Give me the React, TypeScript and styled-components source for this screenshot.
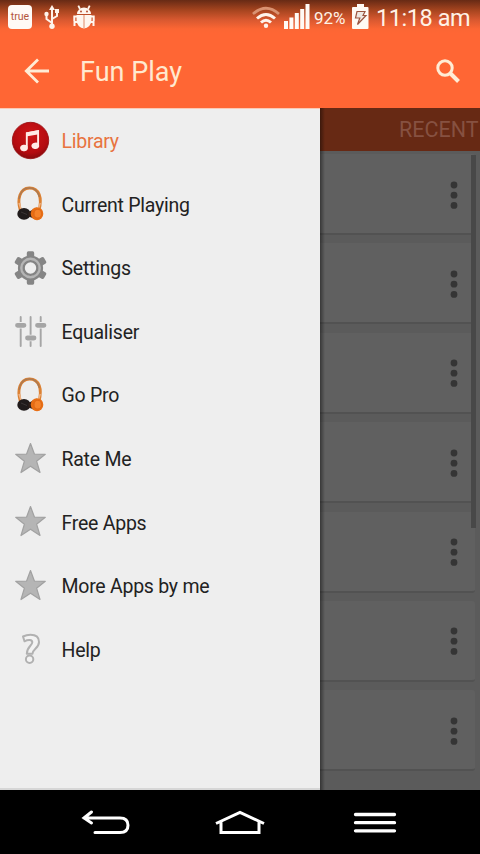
import React from "react";
import styled, { createGlobalStyle } from "styled-components";

const GlobalStyle = createGlobalStyle`
  * { box-sizing: border-box; }
  body { margin: 0; background: #000; font-family: Roboto, "Liberation Sans", sans-serif; }
  svg { display: block; flex: none; overflow: visible; }
`;

const Screen = styled.div`
  width: 480px;
  height: 854px;
  display: flex;
  flex-direction: column;
  overflow: hidden;
  background: #000;
`;

const Header = styled.header`
  height: 108px;
  flex: none;
  background: linear-gradient(#672a15 0, #a5441f 10px, #d95930 20px, #fc6634 29px, #ff6634 34px);
`;

const StatusBar = styled.div`
  height: 34px;
  display: flex;
  align-items: flex-start;
  color: #fff2e6;
`;

const StatusGroup = styled.div<{ $push?: boolean }>`
  height: 34px;
  display: flex;
  margin-left: ${(p) => (p.$push ? "auto" : "0")};
`;

const TrueBadge = styled.div`
  width: 24px;
  height: 24px;
  margin: 5px 0 0 8px;
  border-radius: 4px;
  background: #fffaf6;
  color: #b4553a;
  font-size: 10.5px;
  line-height: 23px;
  text-align: center;
`;

const StatusText = styled.span<{ $size: number; $width: number; $left: number; $spacing?: number }>`
  width: ${(p) => p.$width}px;
  margin-left: ${(p) => p.$left}px;
  font-size: ${(p) => p.$size}px;
  letter-spacing: ${(p) => p.$spacing ?? 0}px;
  line-height: 36px;
  white-space: nowrap;
`;

const ActionBar = styled.div`
  height: 74px;
  display: flex;
  align-items: center;
  padding: 0 20px 0 24px;
`;

const Title = styled.h1`
  flex: 1;
  margin: 2px 0 0 31px;
  color: #ffe9cf;
  font-size: 27px;
  font-weight: 400;
  line-height: 74px;
`;

const Body = styled.main`
  height: 682px;
  flex: none;
  display: flex;
`;

const Drawer = styled.nav`
  width: 320px;
  flex: none;
  background: #eee;
  border-top: 1px solid #fbc9b5;
  border-bottom: 2px solid #d6d6d6;
`;

const DrawerItem = styled.div<{ $active?: boolean }>`
  height: 63.6px;
  display: flex;
  align-items: center;
  gap: 11px;
  padding-left: 11px;
  font-size: 19.5px;
  letter-spacing: -0.25px;
  color: ${(p) => (p.$active ? "#e8733f" : "#222")};
`;

const ItemLabel = styled.span`
  padding: 1.5px 0 0 0.5px;
`;

const Content = styled.section`
  flex: 1;
  display: flex;
  flex-direction: column;
  position: relative;
  background: #5b5b5b;
`;

const DrawerShadow = styled.div`
  position: absolute;
  inset: 0 auto 0 0;
  width: 5px;
  background: linear-gradient(90deg, rgba(0, 0, 0, 0.42), rgba(0, 0, 0, 0));
`;

const TabStrip = styled.div`
  height: 43px;
  flex: none;
  padding-left: 79px;
  overflow: hidden;
  background: #672914;
  color: #865141;
  font-size: 21.5px;
  line-height: 43px;
  white-space: nowrap;
`;

const Cards = styled.div`
  display: flex;
  flex-direction: column;
  gap: 8.4px;
  padding: 3px 5px 0 0;
`;

const Card = styled.div`
  height: 81px;
  display: flex;
  align-items: center;
  justify-content: flex-end;
  padding: 2px 17px 0 0;
  background: #606060;
  border-bottom: 2px solid #525252;
  border-radius: 0 3px 3px 0;
`;

const ScrollThumb = styled.div`
  position: absolute;
  top: 47px;
  right: 4px;
  width: 5px;
  height: 373px;
  background: #484848;
`;

const NavBar = styled.footer`
  height: 64px;
  flex: none;
  display: flex;
  background: #000;
`;

const NavSlot = styled.div<{ $left: number }>`
  margin: 20px 0 0 ${(p) => p.$left}px;
`;

const Usb = () => (
  <svg width="16" height="24" viewBox="0 0 16 24" fill="none" stroke="#fff3ea" strokeWidth="2">
    <path d="M8 3v18M8 18L2.5 14V10M8 14l5-3V7" />
    <path d="M8 0l3 5H5z" fill="#fff3ea" stroke="none" />
    <circle cx="8" cy="21.3" r="2.7" fill="#fff3ea" stroke="none" />
    <circle cx="2.5" cy="9" r="2.2" fill="#fff3ea" stroke="none" />
    <path d="M11 4h4v4h-4z" fill="#fff3ea" stroke="none" />
  </svg>
);

const Bug = () => (
  <svg width="24" height="24" viewBox="0 0 24 24" fill="#fff6ee">
    <path d="M5 9a7 6.5 0 0 1 14 0z" />
    <path d="M8 4L6.3.6M16 4L17.7.6" stroke="#fff6ee" strokeWidth="1.8" />
    <path d="M5 11.5H2.3V16M19 11.5h2.7V16M5 17H2.5v4M19 17h2.5v4" stroke="#fff6ee" strokeWidth="2" fill="none" />
    <path d="M4.5 10h15v5a7.5 8.5 0 0 1-15 0z" />
    <path d="M12 10v13" stroke="#df8a68" />
    <circle cx="9" cy="6.5" r="1" fill="#b65131" />
    <circle cx="15" cy="6.5" r="1" fill="#b65131" />
  </svg>
);

const Wifi = () => (
  <svg width="28" height="24" viewBox="0 0 28 24" fill="none" stroke="#fff3ea" strokeWidth="3">
    <path d="M1 9Q14-2.5 27 9" stroke="#d99272" strokeWidth="2.8" />
    <path d="M5 13.5Q14 5.5 23 13.5" />
    <path d="M9 17.5Q14 13 19 17.5" />
    <circle cx="14" cy="20.7" r="2.2" fill="#fff3ea" stroke="none" />
  </svg>
);

const Signal = () => (
  <svg width="26" height="25" viewBox="0 0 26 25" fill="#fffaf5">
    <path d="M0 17h4v8H0zM5.4 13.5h4V25h-4zM10.8 9h4v16h-4zM16.2 5h4v20h-4zM21.5 0h4v25h-4z" />
  </svg>
);

const Battery = () => (
  <svg width="17" height="25" viewBox="0 0 17 25">
    <path d="M5 0h7v3h3.5q1 0 1 1v20q0 1-1 1H1q-1 0-1-1V4q0-1 1-1h4z" fill="#fffaf5" />
    <path d="M5 7.5h8l-2 4h3L5.5 20.5 7.8 14H3.5z" fill="#eee8e3" stroke="#9b5541" strokeWidth="1.2" />
  </svg>
);

const BackArrow = () => (
  <svg width="25" height="26" viewBox="0 0 25 26" fill="none" stroke="#ffecd5" strokeWidth="2.8">
    <path d="M14 1.5L2.3 13 14 24.5M2.3 13H25" />
  </svg>
);

const Search = () => (
  <svg width="25" height="26" viewBox="0 0 25 26" fill="none" stroke="#ffecd5">
    <circle cx="10" cy="10" r="7.2" strokeWidth="3" />
    <path d="M15 15l8.5 8.5" strokeWidth="4" />
  </svg>
);

const MusicIcon = () => (
  <svg width="39" height="40" viewBox="0 0 39 40">
    <defs>
      <radialGradient id="disc" cx="50%" cy="35%" r="65%">
        <stop offset="0" stopColor="#cf1517" />
        <stop offset="0.75" stopColor="#b40b10" />
        <stop offset="1" stopColor="#860a0d" />
      </radialGradient>
    </defs>
    <circle cx="19.5" cy="19.5" r="18.2" fill="url(#disc)" stroke="#950b0e" strokeWidth="0.8" />
    <path d="M15.8 26.5V12.2l11.3-2v14" fill="none" stroke="#ffeae6" strokeWidth="1.9" />
    <path d="M15 11.4l13-2.3v4.2l-13 2.3z" fill="#ffeae6" />
    <ellipse cx="13" cy="27" rx="3.9" ry="3.2" fill="#ffeae6" transform="rotate(-12 13 27)" />
    <ellipse cx="24.3" cy="24.8" rx="3.9" ry="3.2" fill="#ffeae6" transform="rotate(-12 24.3 24.8)" />
  </svg>
);

const Headphones = () => (
  <svg width="39" height="40" viewBox="0 0 39 40">
    <path d="M9.3 26C6 16 8.500 4.200 18.300 4c10.200-.2 13 10.500 9.700 22" fill="none" stroke="#dc8133" strokeWidth="2.900" />
    <path d="M8.100 15C9 8 12 4 18 3.800c6 0 9 3.500 10.500 9" fill="none" stroke="#a87a55" strokeWidth="1.300" />
    <path d="M8 19l2 6M29.300 19l-2 6" stroke="#efb486" strokeWidth="1.500" />
    <ellipse cx="13" cy="29.900" rx="6.700" ry="5.900" fill="#201b1b" />
    <path d="M17.500 28l8-4.500v12l-8-3z" fill="#33211a" />
    <ellipse cx="26" cy="29.700" rx="6.300" ry="6.500" fill="#e96f15" />
    <ellipse cx="26.700" cy="29.700" rx="3.700" ry="4.300" fill="#f5832a" stroke="#d96516" strokeWidth=".8" />
    <path d="M10 28l6 2.500" stroke="#3a3434" />
  </svg>
);

const Gear = () => (
  <svg width="39" height="40" viewBox="0 0 39 40">
    {[0, 60, 120, 180, 240, 300].map((angle) => (
      <path key={angle} d="M15.8 9V5q0-1.8 1.5-1.8h4.4q1.500 0 1.500 1.800v4z" fill="#858585" transform={`rotate(${angle} 19.5 20)`} />
    ))}
    <circle cx="19.5" cy="20" r="10.5" fill="none" stroke="#858585" strokeWidth="4.2" />
    <circle cx="19.5" cy="20" r="9.2" fill="none" stroke="#b5b5b5" strokeWidth="2.4" />
    <circle cx="19.5" cy="20" r="6.9" fill="none" stroke="#848484" strokeWidth="2.4" />
  </svg>
);

const Sliders = () => (
  <svg width="39" height="40" viewBox="0 0 39 40" fill="none" stroke="#a5a5a5" strokeLinecap="round">
    <path d="M9.7 5v29M19.6 5v29M29.7 5v29" strokeWidth="1.9" />
    <path d="M9.7 10v6.6M19.6 22.7v6.600M29.7 10v6.600" stroke="#eee" strokeWidth="3" strokeLinecap="butt" />
    <path d="M6.5 13.3h6.5M16.5 26h6.5M26.500 13.300h6.500" strokeWidth="4.800" />
  </svg>
);

const Star = () => (
  <svg width="39" height="40" viewBox="0 0 39 40">
    <path d="M19.5 4.5l3.9 10.5 10.9.3-8.7 6.9 3.4 11.3-9.5-6.3-9.5 6.3 3.4-11.3-8.7-6.9 10.9-.3z" fill="#b5b5b5" stroke="#a1a1a1" strokeWidth="1.2" strokeLinejoin="round" />
  </svg>
);

const Question = () => (
  <svg width="39" height="40" viewBox="0 0 39 40" fill="none">
    <path d="M12 6.5Q15.500 4.800 19.500 4.800c5.500 0 8.500 2.700 8.500 7.200 0 6.300-6.500 7-6.500 11.800h-5.700c0-7 5.500-8.300 5.500-11.500 0-2.700-4-3-7.800-1z" fill="#f3f3f3" stroke="#b1b1b1" strokeWidth="2" strokeLinejoin="round" />
    <circle cx="18.600" cy="29.200" r="3.700" fill="#f3f3f3" stroke="#b1b1b1" strokeWidth="2" />
  </svg>
);

const More = () => (
  <svg width="8" height="28" viewBox="0 0 8 28" fill="#353535">
    <circle cx="4" cy="4" r="3.4" />
    <circle cx="4" cy="14.2" r="3.4" />
    <circle cx="4" cy="24.4" r="3.4" />
  </svg>
);

const items = [
  { label: "Library", Icon: MusicIcon },
  { label: "Current Playing", Icon: Headphones },
  { label: "Settings", Icon: Gear },
  { label: "Equaliser", Icon: Sliders },
  { label: "Go Pro", Icon: Headphones },
  { label: "Rate Me", Icon: Star },
  { label: "Free Apps", Icon: Star },
  { label: "More Apps by me", Icon: Star },
  { label: "Help", Icon: Question },
];

const IconSlot = styled.div<{ $left: number; $top: number }>`
  margin: ${(p) => p.$top}px 0 0 ${(p) => p.$left}px;
`;

export default function App() {
  return (
    <Screen>
      <GlobalStyle />
      <Header>
        <StatusBar>
          <StatusGroup>
            <TrueBadge>true</TrueBadge>
            <IconSlot $left={12} $top={5}><Usb /></IconSlot>
            <IconSlot $left={12} $top={5}><Bug /></IconSlot>
          </StatusGroup>
          <StatusGroup $push>
            <IconSlot $left={0} $top={5}><Wifi /></IconSlot>
            <IconSlot $left={4} $top={4}><Signal /></IconSlot>
            <StatusText $size={17} $width={38} $left={4}>92%</StatusText>
            <IconSlot $left={0} $top={4}><Battery /></IconSlot>
            <StatusText $size={23.5} $width={104} $left={7} $spacing={-0.45}>11:18 am</StatusText>
          </StatusGroup>
        </StatusBar>
        <ActionBar>
          <BackArrow />
          <Title>Fun Play</Title>
          <Search />
        </ActionBar>
      </Header>
      <Body>
        <Drawer>
          {items.map(({ label, Icon }, index) => (
            <DrawerItem key={label} $active={index === 0}>
              <Icon />
              <ItemLabel>{label}</ItemLabel>
            </DrawerItem>
          ))}
        </Drawer>
        <Content>
          <TabStrip>RECENT</TabStrip>
          <Cards>
            {Array.from({ length: 7 }, (_, index) => (
              <Card key={index}><More /></Card>
            ))}
          </Cards>
          <DrawerShadow />
          <ScrollThumb />
        </Content>
      </Body>
      <NavBar>
        <NavSlot $left={82}>
          <svg width="48" height="26" viewBox="0 0 48 26" fill="none" stroke="#fff" strokeWidth="3" strokeLinecap="round">
            <path d="M9.5 2L2 8l7.5 5M2 8h36q8 0 8 7.200t-8 7.300H13" />
          </svg>
        </NavSlot>
        <NavSlot $left={85}>
          <svg width="50" height="26" viewBox="0 0 50 26" fill="none" stroke="#fff" strokeWidth="3">
            <path d="M1 13.5L25 2.5l24 11M6 11.5v11h38v-11" />
          </svg>
        </NavSlot>
        <NavSlot $left={89}>
          <svg width="42" height="26" viewBox="0 0 42 26" stroke="#fff" strokeWidth="3.3" strokeLinecap="round">
            <path d="M1.5 4.5h39M1.5 12.7h39M1.5 20.8h39" />
          </svg>
        </NavSlot>
      </NavBar>
    </Screen>
  );
}
